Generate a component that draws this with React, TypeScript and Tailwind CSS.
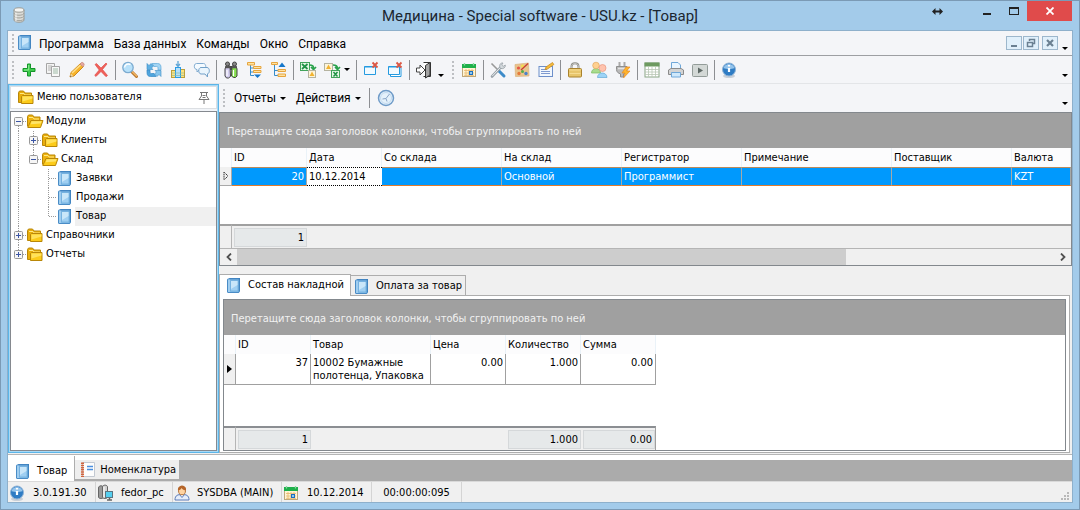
import React from "react";

type IconProps = { children: React.ReactNode };

function Icon({ children }: IconProps) {
  return (
    <svg viewBox="0 0 18 18" className="h-[18px] w-[18px] shrink-0" fill="none" aria-hidden="true">
      {children}
    </svg>
  );
}

/* ---------- icons ---------- */

const BookIcon = () => (
  <Icon>
    <path d="M3 2.500 4.500 1H15v13l-1.500 2H3z" fill="#3a7fbd" />
    <rect x="2.500" y="2" width="11.500" height="13.500" rx=".5" fill="#86bfea" stroke="#4a8cc6" />
    <path d="M5.500 3.500h7.500v10.500H5.500z" fill="#9fcff2" stroke="#6aa9da" strokeWidth=".7" />
    <path d="M6 4h6.500v4L6 12z" fill="#c9e6f9" />
    <path d="M4 2.500v12.500" stroke="#b9dcf5" />
  </Icon>
);

const FolderIcon = () => (
  <Icon>
    <path d="M1.500 13.500V3.500l1-1.500h4l1.500 2h6.500v9.500z" fill="#e9ae0c" stroke="#b98708" strokeLinejoin="round" />
    <path d="M3 4.500h4l1 1.500h6" stroke="#ffe884" />
    <path d="M4.500 14.500V7.500l1-1h10.500v8z" fill="#fccb1a" stroke="#b98708" strokeLinejoin="round" />
    <path d="M5.500 7.500h10v2l-10 3z" fill="#ffe25c" />
  </Icon>
);

const FolderOpenIcon = () => (
  <Icon>
    <path d="M1.500 13.500V3.500l1-1.500h4l1.500 2h6V8" fill="#eeb30f" stroke="#b98708" strokeLinejoin="round" />
    <path d="M3 4.500h4l1 1.500h5" stroke="#ffe884" />
    <path d="M1.800 14.500 5 7.500h12l-2.500 7z" fill="#fccb1a" stroke="#b98708" strokeLinejoin="round" />
    <path d="M5.600 8.300h10l-.8 2.200-10 .8z" fill="#ffe56a" />
  </Icon>
);

const DatabaseIcon = () => (
  <Icon>
    <path d="M4 4v10c0 3 10 3 10 0V4z" fill="#dcdcd8" stroke="#9b9b95" />
    <ellipse cx="9" cy="4" rx="5" ry="2.200" fill="#f6f6f3" stroke="#9b9b95" />
    <path d="M4 7c0 3 10 3 10 0M4 9.700c0 3 10 3 10 0M4 12.400c0 3 10 3 10 0" stroke="#a2a29b" />
    <path d="M6 7v8.500" stroke="#fff" strokeWidth=".8" />
  </Icon>
);

const PlusIcon = () => (
  <Icon>
    <path d="M7.500 3h3v4.500H15v3h-4.500V15h-3v-4.500H3v-3h4.500z" fill="#3ecb4c" stroke="#13952a" strokeLinejoin="round" />
    <path d="M8.700 4v5H4" stroke="#8dec90" />
  </Icon>
);

const CopyIcon = () => (
  <Icon>
    <path d="M2.500 2.500h8v10h-8z" fill="#f3f3f3" stroke="#a5a5a5" />
    <path d="M4 5h4M4 7h3M4 9h3" stroke="#b3b3b3" />
    <path d="M7.500 5.500h8v10h-8z" fill="#f8f8f8" stroke="#a5a5a5" />
    <path d="M9 8h5M9 10h5M9 12h5" stroke="#9ebaa6" />
  </Icon>
);

const PencilIcon = () => (
  <Icon>
    <path d="m2 16 1-4.500L12.500 2.500l3 3L6 15z" fill="#f7b42c" stroke="#d08a1a" strokeLinejoin="round" />
    <path d="m4 12 8.500-8" stroke="#ffe08b" strokeWidth="1.500" />
    <path d="m12 3 1.500-1.500c1-.7 3.500 1.500 2.500 2.700L15 6z" fill="#e5a6a1" stroke="#c58b79" strokeWidth=".7" />
    <path d="m2 16 .8-3.500 2.700 2.700z" fill="#edd7a5" />
    <path d="m2 16 .4-1.600 1.200 1.200z" fill="#555" />
  </Icon>
);

const DeleteIcon = () => (
  <Icon>
    <path d="m3 3.500 1.500-1L9 7l5-5 1 1-4.500 5.500 5 6-1.500 1.200L9 10.500l-5 5-1.300-1.200L7.200 9z" fill="#f0605a" stroke="#dc4540" strokeWidth=".6" />
  </Icon>
);

const SearchIcon = () => (
  <Icon>
    <path d="m10.500 10.500 5 5" stroke="#b9762d" strokeWidth="3" strokeLinecap="round" />
    <path d="m11 10.500 4.500 4.500" stroke="#f4b765" strokeWidth="1.300" strokeLinecap="round" />
    <circle cx="7" cy="6.500" r="5.200" fill="#b8e1fa" stroke="#7cabd0" strokeWidth="1.300" />
    <path d="M3.500 6.500c.5-3 3-4.500 6-3" stroke="#fff" strokeWidth="1.500" />
  </Icon>
);

const RefreshIcon = () => (
  <Icon>
    <path d="M7 2.500h5.500c2.500 0 3.500 1.500 3.500 4v2.500h-3V7c0-1-.5-1.500-1.500-1.500H9z" fill="#a2d4f3" stroke="#5ba8da" strokeWidth=".7" />
    <path d="M11 15.500H5.500c-2.500 0-3.500-1.500-3.500-4V9h3v2c0 1 .5 1.500 1.500 1.500H9z" fill="#4ea4dd" stroke="#3488c4" strokeWidth=".7" />
    <path d="M2 8.500v-6l2 2 2-2 2.500 2.500-2 2 1.500 1.500z" fill="#5fb0e3" stroke="#3b8cc5" strokeWidth=".6" />
    <path d="M16 9.500v6l-2-2-2 2L9.500 13l2-2L10 9.500z" fill="#86c5ed" stroke="#3b8cc5" strokeWidth=".6" />
  </Icon>
);

const InsertChartIcon = () => (
  <Icon>
    <path d="M9 0v5M7 3l2 2.500L11 3" stroke="#61a6d6" strokeWidth="1.300" />
    <rect x="2.500" y="9.500" width="4" height="7" fill="#ffe37e" stroke="#bda03c" />
    <rect x="11.500" y="8.500" width="4" height="8" fill="#ffe37e" stroke="#bda03c" />
    <rect x="6.500" y="6.500" width="5" height="10" fill="#b4e0fb" stroke="#2a9be5" />
    <path d="M3 12h12M3 14.500h12" stroke="#8fb8a0" strokeWidth=".7" />
  </Icon>
);

const ChatIcon = () => (
  <Icon>
    <path d="M3.500 2.500h7c3 0 3 6 0 6H6.500L4 11V8.500C.5 8.500.5 2.500 3.500 2.500z" fill="#f4faff" stroke="#80abd0" />
    <path d="M8 6.500h6c3 0 3 6 .5 6.300V16L12 13H8c-3 0-3-6.500 0-6.500z" fill="#eaf5fd" stroke="#72a0c8" />
  </Icon>
);

const BinocularsIcon = () => (
  <Icon>
    <path d="M7 5h4v4H7z" fill="#444" />
    <path d="M4 5h4l.5 10.500-2 1.500H4.500L3 15V8z" fill="#d3cdef" stroke="#444" />
    <path d="M10 5h4l1 3v7l-1.500 1.500h-2L9.500 15z" fill="#86df4f" stroke="#444" />
    <circle cx="5.500" cy="3" r="2" fill="#888" stroke="#444" />
    <circle cx="12.500" cy="3" r="2" fill="#888" stroke="#444" />
    <path d="M3.500 6h4.500M10 6h4.500" stroke="#555" strokeWidth="2.500" />
    <path d="M5 9v6M11.500 9v6" stroke="#fff" strokeWidth="1.200" />
  </Icon>
);

const TreeIcon = ({ up = false }: { up?: boolean }) => (
  <Icon>
    {up ? (
      <>
        <path d="M4.500 3v11.500H8M4.500 9.500H8" stroke="#378dcb" />
        <path d="m8.500 6 3.500-4.500L15.500 6z" fill="#1577cb" />
        <path d="M1.500 1.500h6v2h-6zM8 8.500h7.500v2H8zM8 13h7.500v2.500H8z" fill="#ffe3a2" stroke="#e6a53f" />
      </>
    ) : (
      <>
        <path d="M4.500 4v10.500H8M4.500 7H8M4.500 11H8" stroke="#378dcb" />
        <path d="M1.500 1.500h7V4h-7zM7.500 5.500H15v2H7.500zM7.500 9.500H15v2H7.500z" fill="#ffe3a2" stroke="#e6a53f" />
        <path d="M8 13.500h7L11.500 17z" fill="#1577cb" />
      </>
    )}
  </Icon>
);

const ExcelExportIcon = ({ flip = false }: { flip?: boolean }) => (
  <Icon>
    {flip ? (
      <>
        <rect x="1.500" y="2.500" width="8" height="7" fill="#fdf5da" stroke="#b5b3a0" />
        <path d="m5.500 3.500 2.500 4.500H3z" fill="#f2b331" />
        <rect x="8.500" y="9.500" width="8" height="7" fill="#e5f6e6" stroke="#42a35b" />
        <path d="m10.500 11 4 4.500m0-4.500-4 4.500" stroke="#1f9245" strokeWidth="1.500" />
        <path d="M10 4c3 0 4.500 1 4.500 3.500M12 6l2.500 2.500L17 6" stroke="#2aa24c" strokeWidth="1.700" />
      </>
    ) : (
      <>
        <rect x="1.500" y="1.500" width="9" height="8" fill="#e5f6e6" stroke="#42a35b" />
        <path d="m3 3 5.500 5M8.500 3 3 8" stroke="#1f9245" strokeWidth="1.700" />
        <path d="M10 4c4 0 4.500 1 4.500 3.500M12 6l2.500 2.500L17 6" stroke="#2aa24c" strokeWidth="1.700" />
        <rect x="9.500" y="9.500" width="7" height="7" fill="#fdf5da" stroke="#b5b3a0" />
        <path d="m13 10.500 2.500 4.500h-5z" fill="#f2b331" />
      </>
    )}
  </Icon>
);

const CloseWindowIcon = ({ multiple = false }: { multiple?: boolean }) => (
  <Icon>
    {multiple && <path d="M4.500 6.500h10.500v9h-10.500z" fill="#fff" stroke="#249ae0" />}
    <path d="M2.500 5.500h11v8h-11z" fill="#f2faff" stroke="#249ae0" />
    <path d="M2.500 6h11" stroke="#249ae0" />
    <path d="m10.500 1.500 5 5m0-5-5 5" stroke="#dc5744" strokeWidth="1.800" />
  </Icon>
);

const ExitIcon = () => (
  <Icon>
    <path d="M8.500 1.500h7v14h-7" fill="#fff" stroke="#333" />
    <path d="m10.500 4.500 4.500-3v12.500l-4.500 3z" fill="#a4a4a4" stroke="#333" />
    <path d="M1.500 7h3.500V4L10 9l-5 5v-3H1.500z" fill="#fff" stroke="#444" />
  </Icon>
);

const CalendarIcon = () => (
  <Icon>
    <rect x="2.500" y="3.500" width="13" height="12" fill="#fff5d6" stroke="#bfa77a" />
    <path d="M2 3h14v4H2z" fill="#1eb04a" />
    <path d="M4.500 2v2.500M13.500 2v2.500" stroke="#8bd7a0" strokeWidth="1.300" />
    <path d="M4 9.500h10M4 12h10M4 14.300h10M6 8v7M9 8v7M12 8v7" stroke="#e8b66a" strokeWidth=".8" />
    <rect x="9.500" y="10.500" width="3" height="3" fill="#8ec9f2" stroke="#1c6fc0" />
  </Icon>
);

const ToolsIcon = () => (
  <Icon>
    <path d="m2.500 2.500 10 10" stroke="#999" strokeWidth="1.600" />
    <path d="m10 10 5 5" stroke="#3d8bc9" strokeWidth="3" strokeLinecap="round" />
    <path d="m3 15.500 8.500-9" stroke="#9aa3aa" strokeWidth="2.600" strokeLinecap="round" />
    <path d="m3.300 15 8.500-9" stroke="#e8ecef" strokeWidth="1" />
    <path d="M11 6.500c-1-2.500.5-5 3-4.500L12.700 4l1.500 1.300L16.300 4c.5 2.500-2 4.200-4.300 3.500z" fill="#d4dade" stroke="#8f989e" strokeWidth=".7" />
  </Icon>
);

const PaletteIcon = () => (
  <Icon>
    <path d="M2 3.500 15.500 2l.5 13-13.500.5z" fill="#e8c48d" stroke="#dcb27c" strokeWidth=".7" />
    <circle cx="5.500" cy="7" r="1.600" fill="#e65745" />
    <circle cx="9.500" cy="5" r="1.500" fill="#f4dc4b" />
    <circle cx="6" cy="12.500" r="1.700" fill="#e67a3c" />
    <circle cx="9.500" cy="10.500" r="1.500" fill="#56ae4c" />
    <circle cx="13" cy="12.500" r="1.700" fill="#4a82cb" />
    <path d="m8 9 7-6.500" stroke="#c93d32" strokeWidth="1.300" />
  </Icon>
);

const NoteIcon = () => (
  <Icon>
    <rect x="2" y="5.500" width="13.500" height="10" fill="#f2f7fd" stroke="#6d8fca" />
    <path d="M4 8.500h6M4 10.500h9M4 12.500h9" stroke="#7f9ad0" />
    <path d="m8 8.500 1-2.500 6.500-4.500 1.300 2L10.500 8z" fill="#f6bd3c" stroke="#c98a22" strokeWidth=".8" />
  </Icon>
);

const LockIcon = () => (
  <Icon>
    <path d="M5.500 8V5.500c0-4.500 7-4.500 7 0V8" stroke="#8d8d88" strokeWidth="2" />
    <path d="M5.500 8V5.500c0-4 7-4 7 0V8" stroke="#d9d9d4" strokeWidth=".7" />
    <rect x="2.500" y="7.500" width="13" height="8.500" rx="1" fill="#e8c66c" stroke="#a9822d" />
    <path d="M3.500 9h11M3.500 12.500h11" stroke="#f6dc92" />
  </Icon>
);

const UsersIcon = () => (
  <Icon>
    <path d="M1.500 12c0-6 9-6 9 0z" fill="#a9dc8e" stroke="#78ba60" strokeWidth=".7" />
    <circle cx="6" cy="4.500" r="3.300" fill="#ffd08f" stroke="#e2a860" strokeWidth=".7" />
    <path d="M7.500 16.500c0-6 9.500-6 9.500 0z" fill="#9dd4f7" stroke="#62a9d6" strokeWidth=".7" />
    <circle cx="12.500" cy="7" r="3.500" fill="#ffc3ae" stroke="#e89680" strokeWidth=".7" />
  </Icon>
);

const PlugIcon = () => (
  <Icon>
    <path d="M5.500 1v5M10.500 1v5" stroke="#aaa" strokeWidth="2" />
    <path d="M2.500 5.500H13v3c0 3-2 4-3.500 4.300V16h-3v-3.200C4.500 12.500 2.500 11 2.500 8.500z" fill="#b9b9b9" stroke="#8f8f8f" />
    <path d="M4 7.500h8" stroke="#e3e3e3" strokeWidth="1.500" />
    <path d="m12 6-4 6h3l-1.500 5 6.500-7h-3.500L16 6z" fill="#ffb52c" stroke="#e88a26" strokeWidth=".7" />
  </Icon>
);

const TableIcon = () => (
  <Icon>
    <rect x="2" y="2" width="14" height="14" fill="#fff" stroke="#8aa686" />
    <path d="M1.500 1.500h15v4h-15z" fill="#6d9a60" />
    <path d="M2 8.500h14M2 11h14M2 13.500h14M5.500 6v10M9 6v10M12.500 6v10" stroke="#b9c6b5" strokeWidth=".8" />
  </Icon>
);

const PrinterIcon = () => (
  <Icon>
    <path d="M4.500 8V1.500h6.500l2.500 2.500v4" fill="#e9f5ff" stroke="#6fa7d8" />
    <path d="M1.500 13.500V9L4 7.500h10L16.500 9v4.500z" fill="#d3d3d3" stroke="#8b8b8b" />
    <path d="M4.500 11.500h9v4.500h-9z" fill="#cfe8fb" stroke="#6fa7d8" />
  </Icon>
);

const PlayIcon = () => (
  <Icon>
    <rect x="1.500" y="3.500" width="15" height="12" rx="1" fill="#d3d8d6" stroke="#939c99" />
    <path d="M7 6.500v6l5-3z" fill="#5e6966" />
  </Icon>
);

const InfoIcon = () => (
  <Icon>
    <ellipse cx="9" cy="15" rx="6" ry="2" fill="#c9d0d8" />
    <circle cx="9" cy="8.500" r="6.500" fill="#2f7cc4" stroke="#8db2d6" />
    <path d="M3.500 7c1.500-5.500 9.500-5.500 11 0-3 1.300-8 1.300-11 0z" fill="#94c4ec" />
    <path d="M9 4v1.500M9 7v4" stroke="#fff" strokeWidth="2.200" />
  </Icon>
);

const ClockIcon = () => (
  <Icon>
    <circle cx="9" cy="9" r="7.500" fill="#e4f1fb" stroke="#6f9bc8" strokeWidth="1.500" />
    <circle cx="9" cy="9" r="5.500" stroke="#c3daf0" />
    <path d="m5.500 10 3.500-.5L12.500 5M9 9.500l1 3" stroke="#8aa6c8" />
  </Icon>
);

const ServerIcon = () => (
  <Icon>
    <path d="M2.500 4c0-3 5-3 5 0v9c0 2-5 2-5 0z" fill="#9a9a9a" stroke="#666" />
    <path d="M6.500 3c0-2.500 5-2.500 5 0v10c0 2-5 2-5 0z" fill="#d3d3d3" stroke="#666" />
    <path d="M8 3v10" stroke="#fff" />
    <rect x="9.500" y="7.500" width="7" height="6" fill="#54cff0" stroke="#5b7480" />
    <path d="M11 16h5M13.500 14v2" stroke="#666" strokeWidth="1.500" />
  </Icon>
);

const PersonIcon = () => (
  <Icon>
    <path d="M2 16c0-5 3-5.500 7-5.500s7 .5 7 5.500z" fill="#e6eefb" stroke="#5d7db9" />
    <path d="m6.500 10.500 2.500 3 2.500-3" fill="#fff" stroke="#5d7db9" />
    <ellipse cx="9" cy="6.500" rx="3.500" ry="4.300" fill="#ffd3a1" stroke="#b4733a" />
    <path d="M5 6.500C4 .5 14 0 13 6.500c-2 0-3.500-1-4.500-2.500C8 5.500 6.500 6.500 5 6.500z" fill="#b5652a" />
  </Icon>
);

const NotebookIcon = () => (
  <Icon>
    <path d="M3.500 1.500h12v14h-12z" fill="#fdfdfd" stroke="#c3c9d2" />
    <path d="M3.500 1.500v14.500" stroke="#d2643d" strokeWidth="3" strokeDasharray="1.500 .7" />
    <path d="M8 5.500h6M8 8.500h6" stroke="#4a8ede" strokeWidth="1.500" />
  </Icon>
);

const PinIcon = () => (
  <svg viewBox="0 0 12 14" className="h-[14px] w-[12px]" fill="none" aria-hidden="true">
    <path d="M2 1.500h8M3.500 1.500v3.500L1 8.500h10L8.500 5V1.500M6 8.500V13M4.500 4.500h3M4.500 6.500h3" stroke="#777" />
  </svg>
);

function Caret({ className = "" }: { className?: string }) {
  return (
    <svg viewBox="0 0 6 3" className={"h-[3px] w-[6px] shrink-0 " + className} aria-hidden="true">
      <path d="M0 0h6L3 3z" fill="#000" />
    </svg>
  );
}

/* ---------- bar parts ---------- */

function Grip() {
  return <span className="h-[18px] w-0 shrink-0 border-l-2 border-dotted border-[#bdbfc3]" aria-hidden="true" />;
}

function Separator() {
  return (
    <span className="flex h-5 w-[5px] shrink-0 justify-center" aria-hidden="true">
      <span className="h-5 w-px bg-[#8d8f93]" />
    </span>
  );
}

function Overflow({ label }: { label: string }) {
  return (
    <button type="button" aria-label={label} className="flex h-5 w-[10px] shrink-0 items-end justify-center pb-[3px]">
      <Caret />
    </button>
  );
}

type Tool = { label: string; icon: React.ReactNode; menu?: boolean };

const mainTools: Tool[][] = [
  [
    { label: "Добавить", icon: <PlusIcon /> },
    { label: "Копировать", icon: <CopyIcon /> },
    { label: "Изменить", icon: <PencilIcon /> },
    { label: "Удалить", icon: <DeleteIcon /> },
  ],
  [
    { label: "Поиск", icon: <SearchIcon /> },
    { label: "Обновить", icon: <RefreshIcon /> },
    { label: "Вставить итог", icon: <InsertChartIcon /> },
    { label: "Сообщения", icon: <ChatIcon /> },
  ],
  [
    { label: "Найти", icon: <BinocularsIcon /> },
    { label: "Развернуть все", icon: <TreeIcon /> },
    { label: "Свернуть все", icon: <TreeIcon up /> },
  ],
  [
    { label: "Экспорт в Excel", icon: <ExcelExportIcon /> },
    { label: "Импорт из Excel", icon: <ExcelExportIcon flip />, menu: true },
  ],
  [
    { label: "Закрыть окно", icon: <CloseWindowIcon /> },
    { label: "Закрыть все окна", icon: <CloseWindowIcon multiple /> },
  ],
  [{ label: "Выход", icon: <ExitIcon /> }],
];

const extraTools: Tool[][] = [
  [{ label: "Календарь", icon: <CalendarIcon /> }],
  [
    { label: "Настройки", icon: <ToolsIcon /> },
    { label: "Оформление", icon: <PaletteIcon /> },
    { label: "Заметка", icon: <NoteIcon /> },
  ],
  [
    { label: "Блокировка", icon: <LockIcon /> },
    { label: "Пользователи", icon: <UsersIcon /> },
    { label: "Подключение", icon: <PlugIcon /> },
  ],
  [
    { label: "Таблица", icon: <TableIcon /> },
    { label: "Печать", icon: <PrinterIcon /> },
    { label: "Запуск", icon: <PlayIcon /> },
  ],
  [{ label: "О программе", icon: <InfoIcon /> }],
];

function ToolGroups({ groups }: { groups: Tool[][] }) {
  return (
    <>
      {groups.map((group, i) => (
        <React.Fragment key={i}>
          {i > 0 && <Separator />}
          {group.map((tool) => (
            <React.Fragment key={tool.label}>
              <button type="button" aria-label={tool.label} className="flex h-6 w-6 shrink-0 items-center justify-center">
                {tool.icon}
              </button>
              {tool.menu && (
                <button type="button" aria-label={tool.label + ": меню"} className="flex h-6 w-[10px] shrink-0 items-center">
                  <Caret />
                </button>
              )}
            </React.Fragment>
          ))}
        </React.Fragment>
      ))}
    </>
  );
}

/* ---------- title and menu ---------- */

function TitleBar() {
  return (
    <header className="grid h-[29px] shrink-0 grid-cols-[1fr_auto_1fr] items-start">
      <span className="pt-[5px] pl-[9px]">
        <DatabaseIcon />
      </span>
      <h1 className="font-[Roboto,'Noto_Sans',sans-serif] text-[15px] leading-[30px] text-[#1b2630]">
        Медицина - Special software - USU.kz - [Товар]
      </h1>
      <div className="flex h-5 justify-end pr-[7px]">
        <button type="button" aria-label="Переместить" className="mr-6 flex w-[24px] items-center justify-center">
          <svg viewBox="0 0 11 7" className="h-[7px] w-[11px]" aria-hidden="true">
            <path d="M0 3.500 3.500 0v2.500h4V0L11 3.500 7.500 7V4.500h-4V7z" fill="#222" />
          </svg>
        </button>
        <button type="button" aria-label="Свернуть" className="flex w-[27px] items-end justify-center pb-[6px]">
          <span className="h-[2px] w-2 bg-[#222]" />
        </button>
        <button type="button" aria-label="Развернуть" className="flex w-[27px] items-center justify-center">
          <span className="h-2 w-[10px] border border-t-2 border-[#222]" />
        </button>
        <button type="button" aria-label="Закрыть" className="flex w-[45px] items-center justify-center bg-[#e04b4b]">
          <svg viewBox="0 0 8 8" className="h-2 w-2" aria-hidden="true">
            <path d="m.5.5 7 7m0-7-7 7" stroke="#fff" strokeWidth="1.800" />
          </svg>
        </button>
      </div>
    </header>
  );
}

const mdiButton = "flex h-[14px] w-4 items-center justify-center border border-[#9db7cc] bg-[#e1f0fb]";

function MenuBar() {
  return (
    <nav className="flex h-[25px] shrink-0 items-center border-b border-[#9d9fa3] bg-[#f4f5f8] pl-1">
      <Grip />
      <span className="mr-[5px] ml-[2px]">
        <BookIcon />
      </span>
      <div className="flex flex-1 gap-[10px] pt-px font-[Roboto,'Noto_Sans',sans-serif] text-xs text-black">
        {["Программа", "База данных", "Команды", "Окно", "Справка"].map((item) => (
          <button type="button" key={item}>
            {item}
          </button>
        ))}
      </div>
      <button type="button" aria-label="Свернуть документ" className={mdiButton}>
        <svg viewBox="0 0 10 10" className="h-[10px] w-[10px]" aria-hidden="true">
          <path d="M2 8h6" stroke="#6b8092" strokeWidth="2" />
        </svg>
      </button>
      <button type="button" aria-label="Восстановить документ" className={mdiButton + " ml-px"}>
        <svg viewBox="0 0 10 10" className="h-[10px] w-[10px]" fill="none" aria-hidden="true">
          <path d="M3.500 3V1.500h5v4H7" stroke="#6b8092" strokeWidth="1.500" />
          <path d="M1.500 4.500h5v4h-5z" stroke="#6b8092" strokeWidth="1.500" />
        </svg>
      </button>
      <button type="button" aria-label="Закрыть документ" className={mdiButton + " ml-[3px]"}>
        <svg viewBox="0 0 10 10" className="h-[10px] w-[10px]" aria-hidden="true">
          <path d="m2 2 6 6m0-6-6 6" stroke="#6b8092" strokeWidth="2.200" />
        </svg>
      </button>
      <span className="mr-[2px] ml-[2px]">
        <Overflow label="Параметры меню" />
      </span>
    </nav>
  );
}

function MainToolbar() {
  return (
    <div role="toolbar" aria-label="Основная панель" className="flex h-7 shrink-0 items-center border-b border-[#e3e5e8] bg-[#f4f5f8] pr-[2px] pl-1">
      <Grip />
      <span className="w-[3px]" />
      <ToolGroups groups={mainTools} />
      <Overflow label="Кнопки панели" />
      <span className="mr-[3px] ml-[6px] flex">
        <Grip />
      </span>
      <ToolGroups groups={extraTools} />
      <span className="ml-auto">
        <Overflow label="Параметры панели" />
      </span>
    </div>
  );
}

/* ---------- navigation tree ---------- */

type Guide = "line" | "blank" | "tee" | "end" | "minusFirst" | "minusLast" | "plusMid" | "plusLast";

function GuideCell({ kind }: { kind: Guide }) {
  const box = kind.startsWith("plus") || kind.startsWith("minus");
  const up = kind !== "blank" && kind !== "minusFirst";
  const down = kind === "line" || kind === "tee" || kind === "minusFirst" || kind === "plusMid";
  const side = kind !== "blank" && kind !== "line";
  return (
    <svg viewBox="0 0 15 19" className="h-[19px] w-[15px] shrink-0" fill="none" aria-hidden="true">
      <g stroke="#9a9a9a" strokeDasharray="1 1">
        {up && <path d="M7.500 0v10" />}
        {down && <path d="M7.500 10v9" />}
        {side && <path d="M8 9.500h7" />}
      </g>
      {box && (
        <>
          <rect x="3.500" y="5.500" width="8" height="8" rx="1" fill="#f6f6f6" stroke="#989898" />
          <path d={kind.startsWith("plus") ? "M5 9.500h5M7.500 7v5" : "M5 9.500h5"} stroke="#3b55a5" />
        </>
      )}
    </svg>
  );
}

type TreeRow = { label: string; guides: Guide[]; icon: React.ReactNode; selected?: boolean };

const treeRows: TreeRow[] = [
  { label: "Модули", guides: ["minusFirst"], icon: <FolderOpenIcon /> },
  { label: "Клиенты", guides: ["line", "plusMid"], icon: <FolderIcon /> },
  { label: "Склад", guides: ["line", "minusLast"], icon: <FolderOpenIcon /> },
  { label: "Заявки", guides: ["line", "blank", "tee"], icon: <BookIcon /> },
  { label: "Продажи", guides: ["line", "blank", "tee"], icon: <BookIcon /> },
  { label: "Товар", guides: ["line", "blank", "end"], icon: <BookIcon />, selected: true },
  { label: "Справочники", guides: ["plusMid"], icon: <FolderIcon /> },
  { label: "Отчеты", guides: ["plusLast"], icon: <FolderIcon /> },
];

function UserMenu() {
  return (
    <aside className="flex w-[211px] shrink-0 flex-col gap-[2px] border border-[#5cb5e8] bg-[#f2f5f9] p-px outline outline-1 -outline-offset-2 outline-[#a8d9f5]">
      <div className="flex h-[23px] shrink-0 items-center border border-[#dcdfe3] bg-white pr-1 pl-[6px]">
        <FolderIcon />
        <h2 className="ml-[2px] flex-1 text-[11px]">Меню пользователя</h2>
        <button type="button" aria-label="Закрепить" className="flex h-4 w-4 items-center justify-center">
          <PinIcon />
        </button>
      </div>
      <ul role="tree" aria-label="Меню пользователя" className="flex-1 border border-[#85898f] bg-white">
        {treeRows.map((row) => (
          <li key={row.label} role="treeitem" aria-level={row.guides.length} aria-selected={!!row.selected} className="flex h-[19px] items-center">
            {row.guides.map((g, i) => (
              <GuideCell key={i} kind={g} />
            ))}
            {row.icon}
            <button type="button" className={"ml-px h-[19px] flex-1 px-px text-left text-[11px] " + (row.selected ? "bg-[#f0f0f0]" : "")}>
              {row.label}
            </button>
          </li>
        ))}
      </ul>
    </aside>
  );
}

/* ---------- grids ---------- */

function GroupPanel() {
  return (
    <p className="h-[35px] shrink-0 bg-[#a0a0a0] pl-[7px] text-[11px] leading-[38px] text-[#f1f1f1]">
      Перетащите сюда заголовок колонки, чтобы сгруппировать по ней
    </p>
  );
}

const headCell = "h-[19px] border-r border-[#eaf2f8] bg-[#fcfcfd] p-0 pl-[2px] text-left font-normal first:pl-0";
const total = "block h-[19px] border border-[#d5d8da] bg-[#e6e9ea] pr-[2px] text-right leading-[17px]";

function DocumentsGrid() {
  const cell =
    "h-[19px] border-t border-r border-b border-t-[#b98a5c] border-r-[#a5a9a8] border-b-[#e07b2c] bg-[#0099fd] px-[2px] text-white";
  return (
    <section aria-label="Документы" className="flex shrink-0 flex-col border border-[#83888d] bg-white">
      <GroupPanel />
      <table className="w-full table-fixed border-separate border-spacing-0 text-[11px] leading-[13px]">
        <colgroup>
          <col className="w-[12px]" />
          <col className="w-[75px]" />
          <col className="w-[75px]" />
          <col className="w-[120px]" />
          <col className="w-[120px]" />
          <col className="w-[120px]" />
          <col className="w-[150px]" />
          <col className="w-[120px]" />
          <col />
        </colgroup>
        <thead>
          <tr>
            <th className={headCell} aria-label="Текущая строка" />
            {["ID", "Дата", "Со склада", "На склад", "Регистратор", "Примечание", "Поставщик", "Валюта"].map((name) => (
              <th key={name} scope="col" className={headCell}>
                {name}
              </th>
            ))}
          </tr>
        </thead>
        <tbody>
          <tr>
            <td className="h-[19px] border-r border-b border-[#a9a9a9] bg-[#f0f0f0] p-0">
              <svg viewBox="0 0 6 8" className="mx-auto h-2 w-[6px]" fill="none" aria-hidden="true">
                <path d="M1 0v8M1.500.5 5 4 1.500 7.500" stroke="#222" strokeDasharray="1.300 .8" />
              </svg>
            </td>
            <td className={cell + " text-right"}>20</td>
            <td className="h-[19px] border-y border-dotted border-black bg-white px-[2px]">10.12.2014</td>
            <td className={cell} />
            <td className={cell}>Основной</td>
            <td className={cell}>Программист</td>
            <td className={cell} />
            <td className={cell} />
            <td className={cell}>KZT</td>
          </tr>
          <tr>
            <td colSpan={9} className="h-[38px] p-0" />
          </tr>
        </tbody>
        <tfoot className="bg-[#f0f0f0]">
          <tr>
            <td className="h-6 border-t-2 border-r border-t-[#a0a0a0] border-r-[#b5b5b5] p-0" />
            <td className="border-t-2 border-[#a0a0a0] p-0 pl-[2px]">
              <span className={total}>1</span>
            </td>
            <td colSpan={7} className="border-t-2 border-[#a0a0a0] p-0" />
          </tr>
        </tfoot>
      </table>
      <div className="flex h-[17px] border-t border-[#b5b5b5] bg-[#f0f0f0]">
        <button type="button" aria-label="Прокрутить влево" className="flex w-[17px] items-center justify-center">
          <svg viewBox="0 0 6 8" className="h-2 w-[6px]" fill="none" aria-hidden="true">
            <path d="M5 .5 1.500 4 5 7.500" stroke="#505050" strokeWidth="1.800" />
          </svg>
        </button>
        <div className="flex-1">
          <div className="h-4 w-[74.500%] bg-[#cdcdcd]" />
        </div>
        <button type="button" aria-label="Прокрутить вправо" className="flex w-[17px] items-center justify-center">
          <svg viewBox="0 0 6 8" className="h-2 w-[6px]" fill="none" aria-hidden="true">
            <path d="M1 .5 4.500 4 1 7.500" stroke="#505050" strokeWidth="1.800" />
          </svg>
        </button>
      </div>
    </section>
  );
}

function ItemsGrid() {
  const cell = "h-[31px] border-r border-b border-[#a0a0a0] px-[2px] pt-[2px] align-top";
  const foot = "border-t-2 border-[#8b8e92] p-0";
  return (
    <section aria-label="Состав накладной" className="flex flex-1 flex-col border border-[#83888d] bg-white">
      <GroupPanel />
      <div className="flex flex-1 flex-col justify-between overflow-x-auto">
        <table className="w-[432px] flex-1 table-fixed border-separate border-spacing-0 text-[11px] leading-[13px]">
          <colgroup>
            <col className="w-[12px]" />
            <col className="w-[75px]" />
            <col className="w-[120px]" />
            <col className="w-[75px]" />
            <col className="w-[75px]" />
            <col className="w-[75px]" />
          </colgroup>
          <thead>
            <tr>
              <th className={headCell} aria-label="Текущая строка" />
              {["ID", "Товар", "Цена", "Количество", "Сумма"].map((name) => (
                <th key={name} scope="col" className={headCell}>
                  {name}
                </th>
              ))}
            </tr>
          </thead>
          <tbody>
            <tr>
              <td className="h-[31px] border-r border-b border-[#a0a0a0] bg-[#f0f0f0] p-0">
                <svg viewBox="0 0 5 8" className="mx-auto h-2 w-[5px]" aria-hidden="true">
                  <path d="M0 0v8l5-4z" fill="#000" />
                </svg>
              </td>
              <td className={cell + " text-right"}>37</td>
              <td className={cell}>10002 Бумажные полотенца, Упаковка</td>
              <td className={cell + " text-right"}>0.00</td>
              <td className={cell + " text-right"}>1.000</td>
              <td className={cell + " text-right"}>0.00</td>
            </tr>
            <tr>
              <td colSpan={6} className="h-[41px] p-0" />
            </tr>
          </tbody>
          <tfoot className="bg-[#f0f0f0]">
            <tr>
              <td className={"h-6 border-r border-r-[#b5b5b5] " + foot} />
              <td className={foot + " pl-[2px]"}>
                <span className={total}>1</span>
              </td>
              <td colSpan={2} className={foot} />
              <td className={foot + " pl-[2px]"}>
                <span className={total}>1.000</span>
              </td>
              <td className={foot + " border-r border-r-[#a0a0a0] pl-[2px]"}>
                <span className={total}>0.00</span>
              </td>
            </tr>
          </tfoot>
        </table>
      </div>
    </section>
  );
}

/* ---------- workspace ---------- */

function Workspace() {
  return (
    <main className="flex min-w-0 flex-1 flex-col bg-[#f0f0f0]">
      <div role="toolbar" aria-label="Панель документа" className="flex h-7 shrink-0 items-center bg-[#f4f5f8] pr-[2px] pl-1">
        <Grip />
        <div className="ml-[9px] flex gap-[10px] font-[Roboto,'Noto_Sans',sans-serif] text-xs">
          {["Отчеты", "Действия"].map((item) => (
            <button type="button" key={item} className="flex items-center gap-1">
              {item}
              <Caret />
            </button>
          ))}
        </div>
        <span className="ml-[6px] flex">
          <Separator />
        </span>
        <button type="button" aria-label="Время" className="flex h-6 w-7 items-center justify-center">
          <ClockIcon />
        </button>
        <span className="ml-auto">
          <Overflow label="Параметры панели документа" />
        </span>
      </div>
      <DocumentsGrid />
      <div role="tablist" aria-label="Части накладной" className="relative z-10 mt-2 flex h-[21px] shrink-0 items-end text-[11px]">
        <button type="button" role="tab" aria-selected="true" className="-mb-px flex h-[22px] items-center border border-b-0 border-[#adadad] bg-white pr-[6px] pl-[5px]">
          <BookIcon />
          <span className="ml-[5px]">Состав накладной</span>
        </button>
        <button type="button" role="tab" aria-selected="false" className="flex h-5 items-center border border-b-0 border-l-0 border-[#adadad] bg-[#efefef] pt-[2px] pr-[3px] pl-[2px]">
          <BookIcon />
          <span className="ml-[5px]">Оплата за товар</span>
        </button>
      </div>
      <div className="mr-[2px] flex flex-1 border border-[#adadad] bg-white px-[3px] pt-[3px] pb-px">
        <ItemsGrid />
      </div>
    </main>
  );
}

function DocumentTabs() {
  return (
    <div className="mt-px shrink-0 border-t border-[#b5b5b5] bg-white pt-[5px]">
      <div role="tablist" aria-label="Открытые документы" className="flex h-[21px] items-start bg-[#ababab] text-[11px]">
        <button type="button" role="tab" aria-selected="true" className="-mt-1 flex h-[25px] items-center border-r border-[#adadad] bg-white pt-[6px] pr-[7px] pl-[6px]">
          <BookIcon />
          <span className="ml-[5px]">Товар</span>
        </button>
        <button type="button" role="tab" aria-selected="false" className="flex h-[19px] items-center bg-[#eeeeee] pt-px pr-[3px] pl-1">
          <NotebookIcon />
          <span className="ml-[3px]">Номенклатура</span>
        </button>
      </div>
    </div>
  );
}

const segment = "flex items-center border-r border-[#d4d4d4] pt-[2px]";

function StatusBar() {
  return (
    <footer className="flex h-[21px] shrink-0 border-t border-[#d9d9d9] bg-[#f0f0f0] text-[11px]">
      <div className={segment + " w-[88px] gap-[7px]"}>
        <InfoIcon />
        3.0.191.30
      </div>
      <div className={segment + " w-[77px] gap-[7px]"}>
        <ServerIcon />
        fedor_pc
      </div>
      <div className={segment + " w-[109px] gap-[6px]"}>
        <PersonIcon />
        SYSDBA (MAIN)
      </div>
      <div className={segment + " w-[90px] gap-[7px]"}>
        <CalendarIcon />
        10.12.2014
      </div>
      <div className={segment + " w-[90px] justify-center"}>00:00:00:095</div>
      <div className="flex flex-1 items-end justify-end pr-[3px] pb-[2px]">
        <svg viewBox="0 0 8 8" className="h-2 w-2" fill="#b8b8b8" aria-hidden="true">
          <path d="M0 6h2v2H0zM3 6h2v2H3zM6 6h2v2H6zM3 3h2v2H3zM6 3h2v2H6zM6 0h2v2H6z" />
        </svg>
      </div>
    </footer>
  );
}

export default function App() {
  return (
    <div className="flex min-h-screen flex-col border border-[#7b9ab5] bg-[#a3cbea] font-['DejaVu_Sans_Condensed','Noto_Sans',sans-serif] text-black">
      <TitleBar />
      <div className="mx-[6px] mb-[6px] flex flex-1 flex-col border border-[#8eb0cb] bg-[#f0f0f0]">
        <MenuBar />
        <MainToolbar />
        <div className="flex flex-1">
          <UserMenu />
          <Workspace />
        </div>
        <DocumentTabs />
        <StatusBar />
      </div>
    </div>
  );
}
